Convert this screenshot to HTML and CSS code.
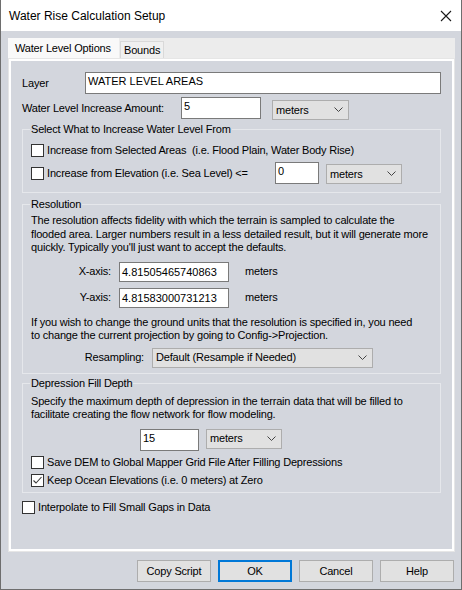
FILE: index.html
```html
<!DOCTYPE html>
<html>
<head>
<meta charset="utf-8">
<title>Water Rise Calculation Setup</title>
<link rel="stylesheet" href="styles.css">
</head>
<body>
<div class="window">
  <div class="titlebar">
    <span class="title">Water Rise Calculation Setup</span>
    <svg class="close" width="12" height="12" viewBox="0 0 12 12"><path d="M1 1L11 11M11 1L1 11" stroke="#1a1a1a" stroke-width="1.1" fill="none"/></svg>
  </div>
  <div class="client">
    <div class="tabs">
      <div class="tab active">Water Level Options</div>
      <div class="tab">Bounds</div>
    </div>
    <div class="panel">
      <div class="row r-layer">
        <span class="lbl w-layer">Layer</span>
        <div class="edit grow">WATER LEVEL AREAS</div>
      </div>
      <div class="row r-amount">
        <span class="lbl w-amount">Water Level Increase Amount:</span>
        <div class="edit w-amt-edit">5</div>
        <div class="combo w-amt-combo"><span class="ctext">meters</span><svg class="chev" width="9" height="5" viewBox="0 0 9 5"><path d="M0.5 0.5L4.5 4.5L8.5 0.5" stroke="#444" fill="none"/></svg></div>
      </div>
      <fieldset class="group g-select">
        <legend>Select What to Increase Water Level From</legend>
        <div class="row r-cb1">
          <span class="cb"></span><span>Increase from Selected Areas&nbsp; (i.e. Flood Plain, Water Body Rise)</span>
        </div>
        <div class="row r-cb2">
          <span class="cbwrap"><span class="cb"></span><span>Increase from Elevation (i.e. Sea Level) &lt;=</span></span>
          <div class="edit w-elev-edit">0</div>
          <div class="combo w-elev-combo"><span class="ctext">meters</span><svg class="chev" width="9" height="5" viewBox="0 0 9 5"><path d="M0.5 0.5L4.5 4.5L8.5 0.5" stroke="#444" fill="none"/></svg></div>
        </div>
      </fieldset>
      <fieldset class="group g-res">
        <legend>Resolution</legend>
        <p class="para p-res1">The resolution affects fidelity with which the terrain is sampled to calculate the<br>flooded area. Larger numbers result in a less detailed result, but it will generate more<br>quickly. Typically you'll just want to accept the defaults.</p>
        <div class="row r-axis r-x">
          <span class="axlbl">X-axis:</span>
          <div class="edit mid w-axis">4.81505465740863</div>
          <span class="unit">meters</span>
        </div>
        <div class="row r-axis r-y">
          <span class="axlbl">Y-axis:</span>
          <div class="edit mid w-axis">4.81583000731213</div>
          <span class="unit">meters</span>
        </div>
        <p class="para p-res2">If you wish to change the ground units that the resolution is specified in, you need<br>to change the current projection by going to Config-&gt;Projection.</p>
        <div class="row r-resamp">
          <span class="rslbl">Resampling:</span>
          <div class="combo w-resamp"><span class="ctext">Default (Resample if Needed)</span><svg class="chev" width="9" height="5" viewBox="0 0 9 5"><path d="M0.5 0.5L4.5 4.5L8.5 0.5" stroke="#444" fill="none"/></svg></div>
        </div>
      </fieldset>
      <fieldset class="group g-dep">
        <legend>Depression Fill Depth</legend>
        <p class="para p-dep">Specify the maximum depth of depression in the terrain data that will be filled to<br>facilitate creating the flow network for flow modeling.</p>
        <div class="row r-fill">
          <div class="edit w-fill">15</div>
          <div class="combo w-fill-combo"><span class="ctext">meters</span><svg class="chev" width="9" height="5" viewBox="0 0 9 5"><path d="M0.5 0.5L4.5 4.5L8.5 0.5" stroke="#444" fill="none"/></svg></div>
        </div>
        <div class="row r-cb r-save">
          <span class="cb"></span><span>Save DEM to Global Mapper Grid File After Filling Depressions</span>
        </div>
        <div class="row r-cb r-keep">
          <span class="cb"><svg width="11" height="11" viewBox="0 0 11 11"><path d="M1.5 5.5L4 8L9.5 2" stroke="#3a3a3a" stroke-width="1.1" fill="none"/></svg></span><span>Keep Ocean Elevations (i.e. 0 meters) at Zero</span>
        </div>
      </fieldset>
      <div class="row r-cb r-interp">
        <span class="cb"></span><span>Interpolate to Fill Small Gaps in Data</span>
      </div>
    </div>
    <div class="buttons">
      <div class="btn">Copy Script</div>
      <div class="btn default">OK</div>
      <div class="btn">Cancel</div>
      <div class="btn">Help</div>
    </div>
  </div>
</div>
</body>
</html>
```
FILE: styles.css
```css
html, body {
  margin: 0;
  padding: 0;
  background: #d3d6dd;
}

.window {
  width: 462px;
  height: 590px;
  box-sizing: border-box;
  border: 1px solid #6e6e6e;
  border-top: none;
  background: #d3d6dd;
  display: flex;
  flex-direction: column;
  font-family: "Liberation Sans", Arial, sans-serif;
  font-size: 11px;
  line-height: 13px;
  letter-spacing: -0.18px;
  color: #000;
}

.titlebar {
  height: 31px;
  flex: none;
  background: #fff;
  display: flex;
  align-items: center;
  padding-left: 8px;
}

.title {
  font-size: 12px;
  line-height: 16px;
  margin-top: 1px;
  letter-spacing: 0;
}

.close {
  margin-left: auto;
  margin-right: 9px;
  margin-top: 1px;
}

.client {
  flex: 1;
  padding: 7px 7px 0 8px;
  display: flex;
  flex-direction: column;
}

.tabs {
  height: 21px;
  margin: 0 -1px;
  background: #ececec;
  display: flex;
  align-items: flex-end;
}

.tab {
  box-sizing: border-box;
  white-space: nowrap;
}

.tab.active {
  width: 111px;
  height: 21px;
  background: #f9f9f9;
  padding: 4px 0 0 7px;
}

.tab:not(.active) {
  width: 44px;
  height: 18px;
  margin-left: 1px;
  background: #f0f0f0;
  border: 1px solid #d9d9d9;
  border-bottom: none;
  padding: 2px 0 0 3px;
}

.panel {
  height: 492px;
  box-sizing: border-box;
  border: 2px solid #fff;
  box-shadow: 0 0 0 1px #e6e6e6;
  padding: 0 11px;
  display: flex;
  flex-direction: column;
}

.row {
  display: flex;
  white-space: nowrap;
}

.lbl {
  flex: none;
}

.edit {
  box-sizing: border-box;
  border: 1px solid #7a7a7a;
  background: #fff;
  padding: 1px 2px;
  line-height: 14px;
  letter-spacing: 0;
  white-space: nowrap;
  flex: none;
}

.edit.mid {
  line-height: 18px;
  padding: 0 2px;
}

.grow {
  flex: 1;
}

.combo {
  box-sizing: border-box;
  border: 1px solid #adadad;
  background: #e1e1e1;
  display: flex;
  align-items: center;
  padding-left: 3px;
  flex: none;
  height: 20px;
}

.combo .ctext {
  flex: 1;
}

.chev {
  margin-right: 5px;
  margin-top: -1px;
}

.r-layer {
  margin-top: 11px;
  height: 22px;
  align-items: center;
}

.w-layer {
  width: 63px;
}

.r-layer .edit {
  height: 22px;
}

.r-amount {
  margin-top: 3px;
  align-items: flex-start;
}

.w-amount {
  width: 159px;
  line-height: 23px;
}

.w-amt-edit {
  width: 80px;
  height: 22px;
}

.w-amt-combo {
  width: 77px;
  margin-left: 11px;
  margin-top: 3px;
}

.group {
  margin: 0;
  padding: 0 8px 8px;
  border: 1px solid #e5e7eb;
  min-width: 0;
}

.group legend {
  padding: 0 1px;
  margin-left: -1px;
  line-height: 13px;
}

.g-select {
  margin-top: 3px;
}

.cb {
  box-sizing: border-box;
  width: 13px;
  height: 13px;
  border: 1px solid #333;
  background: #fff;
  margin-right: 3px;
  flex: none;
  display: flex;
  align-items: center;
  justify-content: center;
}

.r-cb1 {
  margin-top: 6px;
  height: 16px;
  align-items: center;
}

.r-cb2 {
  margin-top: 4px;
  height: 22px;
  align-items: center;
}

.cbwrap {
  width: 244px;
  display: flex;
  align-items: center;
  flex: none;
}

.w-elev-edit {
  width: 44px;
  height: 22px;
}

.w-elev-combo {
  width: 76px;
  margin-left: 7px;
  align-self: flex-end;
}

.g-res {
  margin-top: 5px;
  padding-bottom: 5px;
}

.para {
  margin: 0;
  line-height: 13.5px;
  white-space: nowrap;
}

.p-res1 {
  margin-top: 3px;
}

.r-axis {
  height: 20px;
  align-items: center;
}

.r-x {
  margin-top: 7px;
}

.r-y {
  margin-top: 6px;
}

.axlbl {
  width: 80px;
  text-align: right;
  margin-right: 8px;
  flex: none;
}

.w-axis {
  width: 110px;
  height: 20px;
}

.unit {
  margin-left: 16px;
}

.p-res2 {
  margin-top: 8px;
}

.r-resamp {
  margin-top: 5px;
  height: 20px;
  align-items: center;
}

.rslbl {
  width: 113px;
  text-align: right;
  margin-right: 8px;
  flex: none;
}

.w-resamp {
  width: 221px;
}

.g-dep {
  margin-top: 3px;
  padding-bottom: 3px;
}

.p-dep {
  margin-top: 5px;
}

.r-fill {
  margin-top: 7px;
  align-items: flex-start;
  padding-left: 109px;
}

.w-fill {
  width: 59px;
  height: 22px;
}

.w-fill-combo {
  width: 76px;
  margin-left: 7px;
}

.r-cb {
  height: 16px;
  align-items: center;
}

.r-save {
  margin-top: 4px;
}

.r-keep {
  margin-top: 2px;
}

.r-interp {
  margin-top: 7px;
}

.buttons {
  margin-top: 9px;
  display: flex;
  justify-content: flex-end;
  gap: 7px;
}

.btn {
  box-sizing: border-box;
  width: 74px;
  height: 22px;
  background: #e1e1e1;
  border: 1px solid #adadad;
  display: flex;
  align-items: center;
  justify-content: center;
}

.btn.default {
  border: 2px solid #0078d7;
}
```
